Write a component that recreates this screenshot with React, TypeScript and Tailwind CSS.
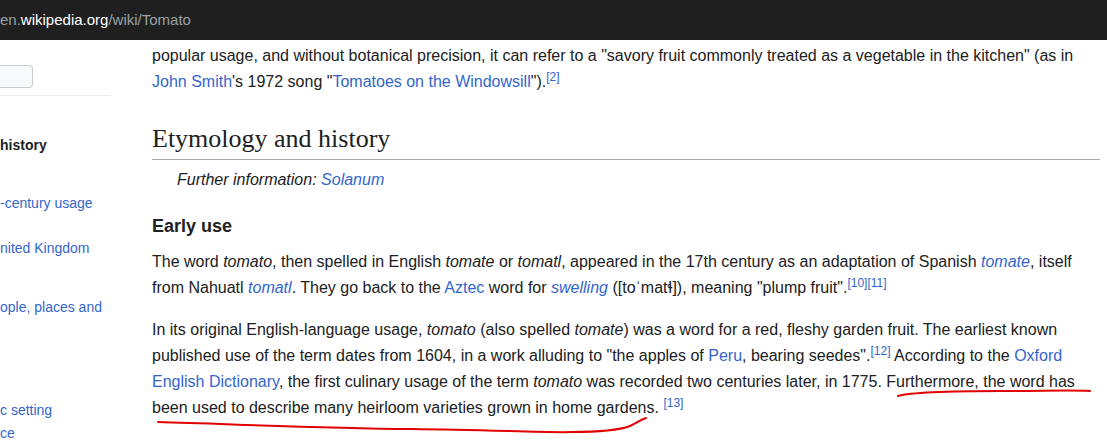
import React from 'react'

const sidebarItems = [
  { id: 1, label: 'history', bold: true, className: 'mt-[40px]' },
  { id: 2, label: '-century usage', className: 'mt-[40px]' },
  { id: 3, label: 'nited Kingdom', className: 'mt-[27px]' },
  { id: 4, label: 'ople, places and', className: 'mt-[41px]' },
  { id: 5, label: 'c setting', className: 'mt-[85px]' },
  { id: 6, label: 'ce', className: 'mt-[5px]' },
]

const Link = ({ children, italic }: { children: React.ReactNode; italic?: boolean }) => (
  <a className={`text-[#3366cc] ${italic ? 'italic' : ''}`}>{children}</a>
)

const Ref = ({ n }: { n: string }) => (
  <sup className="text-[12px] text-[#3366cc]">[{n}]</sup>
)

export default function App() {
  return (
    <div className="h-[441px] w-[1107px] overflow-hidden bg-white font-['Liberation_Sans',Arial,sans-serif] text-[#202122]">
      {/* browser url bar */}
      <div className="flex h-[40px] items-center bg-[#1f1f1f] text-[15px] text-[#9aa0a6]">
        <span>
          en.<span className="text-white">wikipedia.org</span>/wiki/Tomato
        </span>
      </div>

      <div className="flex">
        {/* contents sidebar */}
        <div className="w-[111px] shrink-0 text-[14px]">
          <div className="mt-[25px] h-[23px] w-[33px] rounded-r-sm border border-l-0 border-[#c8ccd1] bg-[#f8f9fa]" />
          <hr className="mt-[7px] border-[#eaecf0]" />
          {sidebarItems.map((item) => (
            <div
              key={item.id}
              className={`${item.className} leading-[18px] ${item.bold ? 'font-bold text-[#202122]' : 'text-[#3366cc]'}`}
            >
              {item.label}
            </div>
          ))}
        </div>

        {/* article body */}
        <div className="relative ml-[41px] w-[948px] pt-[3px] text-[16px] leading-[26px]">
          <p>
            popular usage, and without botanical precision, it can refer to a "savory fruit commonly treated as a vegetable in the kitchen"
            (as in <Link>John Smith</Link>'s 1972 song "<Link>Tomatoes on the Windowsill</Link>").<Ref n="2" />
          </p>

          <h2 className="mt-[27px] border-b border-[#a2a9b1] pb-[3px] font-['Liberation_Serif',Georgia,serif] text-[26px] leading-[34px]">
            Etymology and history
          </h2>

          <div className="mt-[9px] pl-[25px] text-[16px] italic leading-[22px]">
            Further information: <Link>Solanum</Link>
          </div>

          <h3 className="mt-[24px] text-[18px] font-bold leading-[23px]">Early use</h3>

          <p className="mt-[11px]">
            The word <i>tomato</i>, then spelled in English <i>tomate</i> or <i>tomatl</i>, appeared in the 17th century as an adaptation of Spanish{' '}
            <Link italic>tomate</Link>, itself from Nahuatl <Link italic>tomatl</Link>. They go back to the <Link>Aztec</Link> word for{' '}
            <Link italic>swelling</Link> ([toˈmatɬ]), meaning "plump fruit".<Ref n="10" />
            <Ref n="11" />
          </p>

          <p className="mt-[16px]">
            In its original English-language usage, <i>tomato</i> (also spelled <i>tomate</i>) was a word for a red, fleshy garden fruit. The earliest known
            published use of the term dates from 1604, in a work alluding to "the apples of <Link>Peru</Link>, bearing seedes".<Ref n="12" /> According to the{' '}
            <Link>Oxford English Dictionary</Link>, the first culinary usage of the term <i>tomato</i> was recorded two centuries later, in 1775. Furthermore, the word has
            been used to describe many heirloom varieties grown in home gardens. <Ref n="13" />
          </p>

          {/* hand drawn red underline */}
          <svg className="pointer-events-none absolute left-0 top-0" width="948" height="401" fill="none">
            <path d="M746 356 C760 352 800 351 850 351 C890 351 920 350 938 351" stroke="#e00000" strokeWidth="2" strokeLinecap="round" />
            <path d="M6 382 C80 384 160 388 260 389 C340 390 400 393 420 392 C450 392 470 389 478 386 C485 383 488 380 494 378" stroke="#e00000" strokeWidth="2" strokeLinecap="round" />
          </svg>
        </div>
      </div>
    </div>
  )
}
